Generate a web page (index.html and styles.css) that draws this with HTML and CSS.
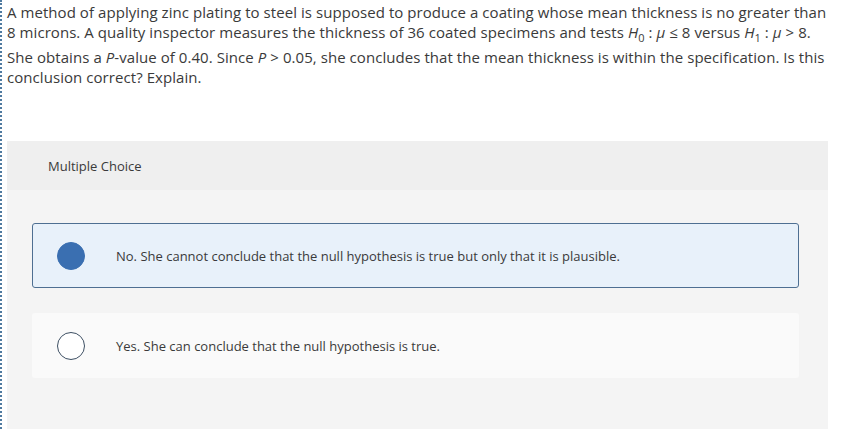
FILE: index.html
```html
<!DOCTYPE html>
<html>
<head>
<meta charset="utf-8">
<link rel="stylesheet" href="styles.css">
</head>
<body>
<div class="page">
  <div class="question">
    <p class="line">A method of applying zinc plating to steel is supposed to produce a coating whose mean thickness is no greater than</p>
    <p class="line tall">8 microns. A quality inspector measures the thickness of 36 coated specimens and tests <i>H</i><sub>0</sub> : <i>μ</i> ≤ 8 versus <i>H</i><sub>1</sub> : <i>μ</i> &gt; 8.</p>
    <p class="line">She obtains a <i>P</i>-value of 0.40. Since <i>P</i> &gt; 0.05, she concludes that the mean thickness is within the specification. Is this</p>
    <p class="line">conclusion correct? Explain.</p>
  </div>
  <div class="panel">
    <div class="panel-head">Multiple Choice</div>
    <div class="panel-body">
      <div class="option selected">
        <span class="radio"></span>
        <span class="label">No. She cannot conclude that the null hypothesis is true but only that it is plausible.</span>
      </div>
      <div class="option">
        <span class="radio"></span>
        <span class="label">Yes. She can conclude that the null hypothesis is true.</span>
      </div>
    </div>
  </div>
</div>
</body>
</html>
```
FILE: styles.css
```css
html, body {
  margin: 0;
  padding: 0;
  background: #ffffff;
  height: 100%;
  overflow: hidden;
}
.page {
  border-left: 2px dotted #4f7aa0;
  height: 100%;
  box-sizing: border-box;
  font-family: "Open Sans", "Liberation Sans", sans-serif;
  color: #3a3a3a;
}
.question {
  padding: 2px 0 0 5px;
  font-size: 15px;
  letter-spacing: 0.06px;
  white-space: nowrap;
}
.line {
  margin: 0;
  height: 20px;
  line-height: 20px;
}
.line.tall {
  height: 25px;
}
.question i {
  font-style: italic;
}
.question sub {
  font-size: 11px;
  line-height: 0;
  vertical-align: -4px;
}
.panel {
  margin: 54px 0 0 5px;
  width: 821px;
  background: #f4f4f4;
  height: 300px;
}
.panel-head {
  background: #efefef;
  height: 49px;
  display: flex;
  align-items: center;
  padding-left: 41px;
  font-size: 13px;
  color: #3a3a3a;
}
.panel-body {
  padding: 33px 29px 0 25px;
  display: flex;
  flex-direction: column;
  gap: 25px;
}
.option {
  height: 65px;
  box-sizing: border-box;
  display: flex;
  align-items: center;
  padding-left: 24px;
  background: #fafafa;
  border: 1px solid transparent;
  border-radius: 3px;
  font-size: 13px;
  color: #3a3a3a;
}
.option.selected {
  background: #e8f1fa;
  border-color: #4e6f92;
}
.radio {
  width: 28px;
  height: 28px;
  box-sizing: border-box;
  border-radius: 50%;
  border: 1.5px solid #3d4f63;
  background: #ffffff;
  flex: none;
  margin-right: 31px;
}
.option.selected .radio {
  background: #3a6fb1;
  border-color: #3a6fb1;
}
```
